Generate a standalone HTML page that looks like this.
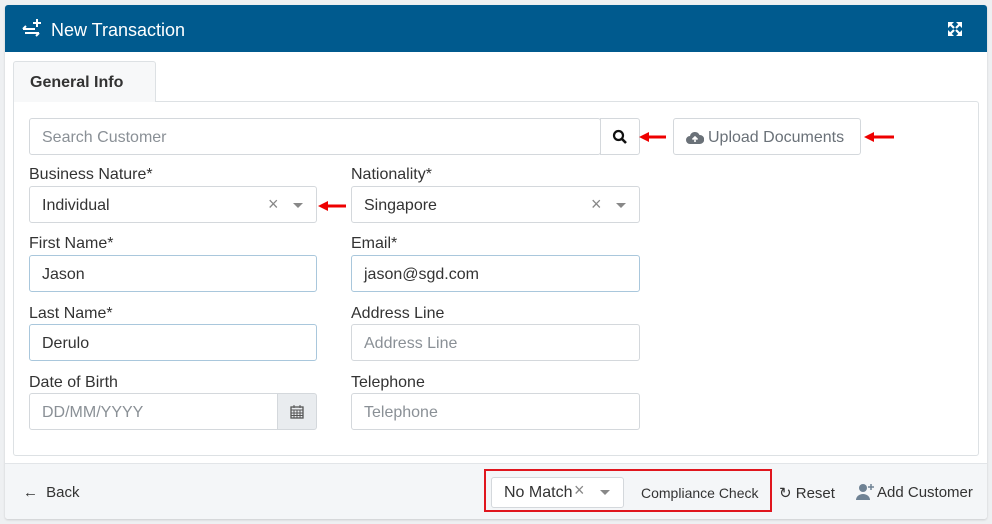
<!DOCTYPE html>
<html><head><style>
*{box-sizing:border-box;margin:0;padding:0}
body{width:992px;height:524px;background:#eef0f2;font-family:"Liberation Sans",sans-serif;position:relative;overflow:hidden;color:#333}
.a{position:absolute}
.card{left:5px;top:5px;width:982px;height:514px;background:#fff;border-radius:3px;box-shadow:0 1px 2px rgba(0,0,0,.15)}
.hdr{left:5px;top:5px;width:982px;height:47px;background:#005a8e;border-radius:3px 3px 0 0;color:#fff;font-size:18px}
.inp{position:absolute;height:37px;border:1px solid #d4d8dc;border-radius:3px;font-size:16px;color:#333;padding:0 12px;line-height:37px;background:#fff}
.ph{color:#8a9096}
.blue{border-color:#a9c7dc}
.lbl{position:absolute;font-size:16px;color:#333}
.x{position:absolute;color:#888;font-size:18px}
.car{position:absolute;width:0;height:0;border-left:5px solid transparent;border-right:5px solid transparent;border-top:5px solid #888}
.ftr{left:5px;top:463px;width:982px;height:56px;background:#f4f6f8;border-top:1px solid #e2e5e8;border-radius:0 0 3px 3px}
.ft{position:absolute;font-size:15px;color:#333;top:483px}
</style></head><body>
<div class="a card"></div>
<div class="a hdr">
<svg class="a" style="left:16px;top:12px" width="22" height="22" viewBox="0 0 22 22"><path d="M2 12h12M2 12l3-3M4 16h14M18 16l-3 3" stroke="#fff" stroke-width="2" fill="none"/><path d="M16 2v8M12 6h8" stroke="#fff" stroke-width="2"/></svg>
<span class="a" style="left:46px;top:15px">New Transaction</span>
<svg class="a" style="left:942px;top:16px" width="16" height="16" viewBox="0 0 16 16"><path d="M1 1h6L1 7zM15 1v6L9 1zM1 15V9l6 6zM15 15H9l6-6z" fill="#fff"/><path d="M3 3l4 4M13 3L9 7M3 13l4-4M13 13L9 9" stroke="#fff" stroke-width="2.2"/></svg>
</div>
<div class="a" style="left:13px;top:101px;width:966px;height:355px;border:1px solid #dde1e4;border-radius:0 3px 3px 3px"></div>
<div class="a" style="left:13px;top:61px;width:143px;height:41px;border:1px solid #dde1e4;border-bottom:none;background:#f7f8f9;border-radius:3px 3px 0 0;font-weight:bold;font-size:16px;color:#333;padding:12px 0 0 16px">General Info</div>

<div class="inp ph" style="left:29px;top:118px;width:572px">Search Customer</div>
<div class="inp" style="left:600px;top:118px;width:40px;border-radius:0 3px 3px 0"><svg style="position:absolute;left:11px;top:10px" width="16" height="16" viewBox="0 0 16 16"><circle cx="6.5" cy="6.5" r="4.5" stroke="#111" stroke-width="2.2" fill="none"/><path d="M10 10l4 4" stroke="#111" stroke-width="2.6"/></svg></div>
<div class="inp" style="left:673px;top:118px;width:188px;color:#6a7178;padding-left:14px"><svg style="position:absolute;left:12px;top:12px" width="18" height="13" viewBox="0 0 18 13"><path d="M4 13a4 4 0 0 1 0-8 5 5 0 0 1 9.5-1A4.5 4.5 0 0 1 14 13z" fill="#6a7178"/><path d="M9 11V6M6.5 8.5L9 6l2.5 2.5" stroke="#fff" stroke-width="1.6" fill="none"/></svg><span style="padding-left:20px">Upload Documents</span></div>

<svg class="a" style="left:639px;top:130px" width="290" height="14"><path d="M0 7l10-5v3.5h17v3H10V12z" fill="#e00"/><path d="M225 7l10-5v3.5h20v3H235V12z" fill="#e00"/></svg>
<svg class="a" style="left:318px;top:199px" width="30" height="14"><path d="M0 7l10-5v3.5h18v3H10V12z" fill="#e00"/></svg>

<div class="lbl" style="left:29px;top:166px">Business Nature*</div>
<div class="inp" style="left:29px;top:186px;width:288px">Individual</div>
<div class="x" style="left:268px;top:194px">×</div><div class="car" style="left:293px;top:203px"></div>
<div class="lbl" style="left:351px;top:166px">Nationality*</div>
<div class="inp" style="left:351px;top:186px;width:289px">Singapore</div>
<div class="x" style="left:591px;top:194px">×</div><div class="car" style="left:616px;top:203px"></div>

<div class="lbl" style="left:29px;top:235px">First Name*</div>
<div class="inp blue" style="left:29px;top:255px;width:288px">Jason</div>
<div class="lbl" style="left:351px;top:235px">Email*</div>
<div class="inp blue" style="left:351px;top:255px;width:289px">jason@sgd.com</div>

<div class="lbl" style="left:29px;top:305px">Last Name*</div>
<div class="inp blue" style="left:29px;top:324px;width:288px">Derulo</div>
<div class="lbl" style="left:351px;top:305px">Address Line</div>
<div class="inp ph" style="left:351px;top:324px;width:289px">Address Line</div>

<div class="lbl" style="left:29px;top:374px">Date of Birth</div>
<div class="inp ph" style="left:29px;top:393px;width:250px;border-radius:3px 0 0 3px">DD/MM/YYYY</div>
<div class="inp" style="left:277px;top:393px;width:40px;background:#e9ecef;border-radius:0 3px 3px 0"><svg style="position:absolute;left:12px;top:10px" width="14" height="15" viewBox="0 0 14 15"><rect x="1" y="3" width="12" height="11" fill="none" stroke="#555" stroke-width="1.3"/><path d="M1 6h12M4 1v3M10 1v3M1 9h12M1 11.5h12M4 6v8M7 6v8M10 6v8" stroke="#555" stroke-width="1"/></svg></div>
<div class="lbl" style="left:351px;top:374px">Telephone</div>
<div class="inp ph" style="left:351px;top:393px;width:289px">Telephone</div>

<div class="a ftr"></div>
<div class="ft" style="left:23px;top:484px">&#8592; <span style="margin-left:4px">Back</span></div>
<div class="a" style="left:484px;top:469px;width:288px;height:43px;border:2px solid #e0161e"></div>
<div class="inp" style="left:491px;top:477px;width:133px;height:31px;line-height:30px;font-size:16px;padding-left:12px">No Match</div>
<div class="x" style="left:574px;top:480px">×</div><div class="car" style="left:600px;top:490px"></div>
<div class="ft" style="left:641px;font-size:14px;top:485px">Compliance Check</div>
<div class="ft" style="left:779px;top:484px">&#8635; Reset</div>
<svg class="a" style="left:856px;top:483px" width="20" height="18" viewBox="0 0 20 18"><circle cx="7" cy="5" r="4" fill="#6f8294"/><path d="M0 17a7 6 0 0 1 14 0z" fill="#6f8294"/><path d="M15 1v6M12 4h6" stroke="#6f8294" stroke-width="1.5"/></svg>
<div class="ft" style="left:877px;top:484px">Add Customer</div>
</body></html>
